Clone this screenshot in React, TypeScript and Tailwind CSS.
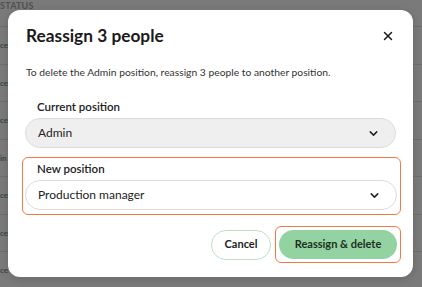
import { X, ChevronDown } from "lucide-react"

const ROWS = ["ce", "ce", "ce", "in", "ce", "ce", "ce"]

function Select({ value, muted }: { value: string; muted?: boolean }) {
  return (
    <div
      className={`flex h-[30px] items-center justify-between rounded-full border border-[#dcdcdc] pl-[12px] pr-[15px] ${
        muted ? "bg-[#efefef]" : "bg-white"
      }`}
    >
      <span className="text-[12px] text-[#222]">{value}</span>
      <ChevronDown size={13} strokeWidth={2.75} className="text-[#222]" />
    </div>
  )
}

export default function App() {
  return (
    <div className="relative h-[287px] w-[422px] overflow-hidden bg-[#7a7a7a] font-['Lato',sans-serif]">
      {/* table behind the overlay */}
      <div className="flex flex-col">
        <div className="h-[27px] border-b border-[#6e6e6e] pt-[1px] text-[9px] font-bold leading-[10px] tracking-wide text-[#505050]">
          STATUS
        </div>
        {ROWS.map((r, i) => (
          <div key={i} className="flex h-[37.5px] items-center border-b border-[#6e6e6e]">
            <span className="text-[8px] font-bold text-[#34493a]">{r}</span>
          </div>
        ))}
      </div>

      {/* dialog */}
      <div className="absolute left-[8px] top-[10px] flex h-[267px] w-[405px] flex-col rounded-[12px] bg-white px-[17px] shadow-[0_2px_8px_rgba(0,0,0,0.15)]">
        <div className="mt-[15px] flex items-center justify-between pl-[1px]">
          <h2 className="text-[17.3px] font-bold leading-[22px] text-[#1a1a1a]">Reassign 3 people</h2>
          <X size={14} strokeWidth={2.5} className="mr-[1px] text-[#1a1a1a]" />
        </div>
        <p className="mt-[19px] pl-[1px] text-[10.3px] leading-[12px] text-[#333]">
          To delete the Admin position, reassign 3 people to another position.
        </p>

        <label className="mt-[22px] pl-[12px] text-[11.5px] font-semibold leading-[14px] text-[#222]">
          Current position
        </label>
        <div className="mt-[4px]">
          <Select value="Admin" muted />
        </div>

        <div className="ml-[-3px] mr-[-5px] mt-[9px] rounded-[6px] border-[1.5px] border-[#f07a45] pb-[4px] pl-[2px] pr-[3px] pt-[4px]">
          <label className="block pl-[12px] text-[11.5px] font-semibold leading-[14px] text-[#222]">New position</label>
          <div className="mt-[4px]">
            <Select value="Production manager" />
          </div>
        </div>

        <div className="mt-[11px] flex items-center justify-end gap-[4px]">
          <button className="h-[30px] w-[60px] rounded-full border border-[#b9e2c4] bg-white text-[11px] font-bold text-[#222]">
            Cancel
          </button>
          <div className="mr-[-5px] rounded-[6px] border-[1.5px] border-[#f07a45] p-[3px]">
            <button className="h-[29px] w-[118px] rounded-full bg-[#93d3a2] text-[11px] font-bold text-[#1f2f22]">
              Reassign &amp; delete
            </button>
          </div>
        </div>
      </div>
    </div>
  )
}
